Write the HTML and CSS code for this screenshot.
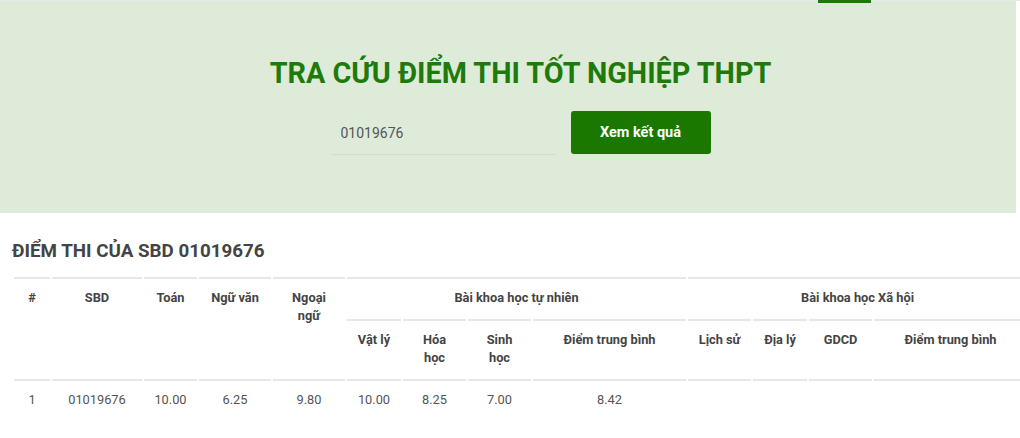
FILE: index.html
```html
<!DOCTYPE html>
<html lang="vi">
<head>
<meta charset="utf-8">
<title>Tra cứu điểm thi tốt nghiệp THPT</title>
<link rel="stylesheet" href="styles.css">
</head>
<body>
<div class="topbar"><span class="tab-indicator"></span></div>
<section class="banner">
  <h1 class="banner-title">TRA CỨU ĐIỂM THI TỐT NGHIỆP THPT</h1>
  <form class="search-row">
    <input class="search-input" type="text" value="01019676">
    <button class="search-btn" type="button">Xem kết quả</button>
  </form>
</section>
<section class="result">
  <h2 class="result-title">ĐIỂM THI CỦA SBD 01019676</h2>
  <div class="table-wrap">
    <table class="score-table">
      <colgroup>
        <col class="c36"><col class="c90"><col class="c53"><col class="c72"><col class="c72">
        <col class="c54"><col class="c63"><col class="c63"><col class="c153">
        <col class="c63"><col class="c54"><col class="c63"><col class="c153">
      </colgroup>
      <thead>
        <tr>
          <th rowspan="2">#</th>
          <th rowspan="2">SBD</th>
          <th rowspan="2">Toán</th>
          <th rowspan="2">Ngữ văn</th>
          <th rowspan="2">Ngoại ngữ</th>
          <th colspan="4">Bài khoa học tự nhiên</th>
          <th colspan="4">Bài khoa học Xã hội</th>
        </tr>
        <tr>
          <th>Vật lý</th>
          <th>Hóa học</th>
          <th>Sinh học</th>
          <th>Điểm trung bình</th>
          <th>Lịch sử</th>
          <th>Địa lý</th>
          <th>GDCD</th>
          <th>Điểm trung bình</th>
        </tr>
      </thead>
      <tbody>
        <tr>
          <td>1</td>
          <td>01019676</td>
          <td>10.00</td>
          <td>6.25</td>
          <td>9.80</td>
          <td>10.00</td>
          <td>8.25</td>
          <td>7.00</td>
          <td>8.42</td>
          <td></td>
          <td></td>
          <td></td>
          <td></td>
        </tr>
      </tbody>
    </table>
  </div>
</section>
</body>
</html>
```

FILE: styles.css
```css
html, body {
  margin: 0;
  padding: 0;
  overflow: hidden;
  background: #ffffff;
  font-family: Roboto, "Liberation Sans", Arial, sans-serif;
}

.topbar {
  position: relative;
  height: 1px;
  width: 1020px;
  background: #e6e9e4;
}

.tab-indicator {
  position: absolute;
  left: 818px;
  top: 0;
  width: 53px;
  height: 3px;
  background: #1b7a06;
  z-index: 2;
}

.banner {
  width: 1016px;
  height: 212px;
  box-sizing: border-box;
  background: #deebd9;
  padding: 54px 0 0 25px;
  display: flex;
  flex-direction: column;
  align-items: center;
}

.banner-title {
  margin: 0;
  font-size: 28.8px;
  line-height: 36px;
  font-weight: 700;
  color: #1f7a0c;
}

.search-row {
  margin: 20px 0 0;
  display: flex;
  gap: 15px;
  align-items: flex-start;
}

.search-input {
  width: 225px;
  height: 44px;
  box-sizing: border-box;
  border: none;
  border-bottom: 1px solid #d3dccf;
  background: transparent;
  padding: 0 10px;
  font-family: Roboto, "Liberation Sans", Arial, sans-serif;
  font-size: 14px;
  color: #555555;
  outline: none;
}

.search-btn {
  width: 140px;
  height: 43px;
  border: none;
  border-radius: 3px;
  background: #1a7700;
  color: #ffffff;
  font-family: Roboto, "Liberation Sans", Arial, sans-serif;
  font-size: 14.5px;
  font-weight: 700;
  cursor: pointer;
}

.result {
  padding-top: 27px;
}

.result-title {
  margin: 0 0 13px 12px;
  font-size: 18.8px;
  line-height: 22px;
  font-weight: 700;
  color: #444444;
}

.table-wrap {
  padding-left: 12px;
  width: 1008px;
  overflow: hidden;
}

.score-table {
  table-layout: fixed;
  width: 1017px;
  border-collapse: separate;
  border-spacing: 2px;
  font-size: 12.8px;
  line-height: 18px;
}

.c36 { width: 36px; }
.c53 { width: 53px; }
.c54 { width: 54px; }
.c63 { width: 63px; }
.c72 { width: 72px; }
.c90 { width: 90px; }
.c153 { width: 153px; }

.score-table th,
.score-table td {
  border-top: 2px solid #e4e7eb;
  padding: 10px 8px;
  text-align: center;
  vertical-align: top;
}

.score-table th {
  font-weight: 700;
  color: #444444;
}

.score-table td {
  font-weight: 400;
  color: #555555;
}
```
